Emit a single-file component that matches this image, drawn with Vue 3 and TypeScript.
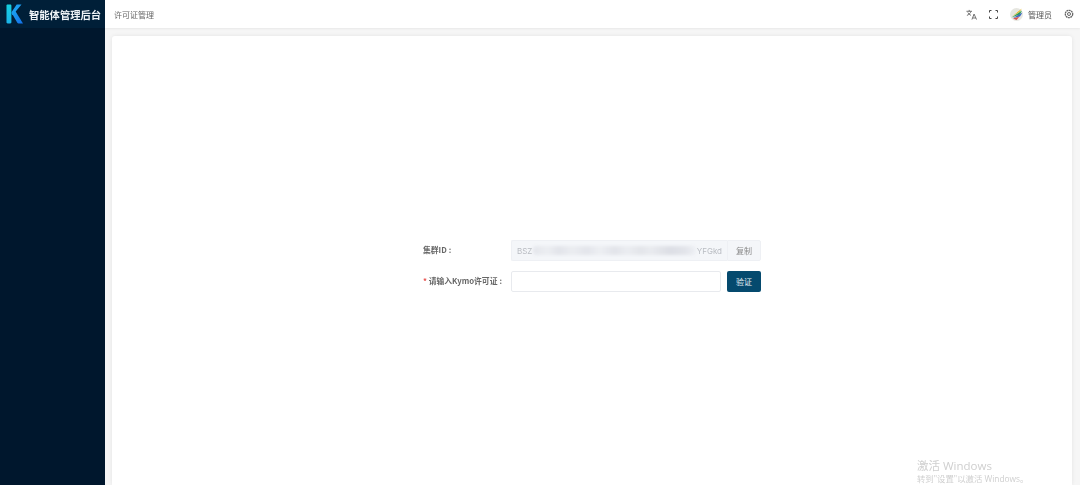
<script setup lang="ts">
const title = '智能体管理后台'
const smearStops = 'linear-gradient(90deg, #e4e6eb 0, #eceef2 9%, #e2e4ea 16%, #ebedf1 24%, #e3e5eb 33%, #edeff3 41%, #e2e4ea 50%, #ebedf1 58%, #e3e5ea 66%, #e9ebef 72%, #dcdee5 84%, #e2e4ea 93%, #eef0f4 100%)'
</script>

<template>
  <div class="app">
    <aside class="side">
      <div class="brand">
        <svg class="logo" width="17" height="20" viewBox="0 0 17 20">
          <defs>
            <linearGradient id="stem" x1="0" y1="0" x2="0" y2="1">
              <stop offset="0" stop-color="#14d0e0" />
              <stop offset="1" stop-color="#1cb4ea" />
            </linearGradient>
            <linearGradient id="leg" x1="0" y1="0" x2="1" y2="1">
              <stop offset="0" stop-color="#1ba6f0" />
              <stop offset="1" stop-color="#1470ea" />
            </linearGradient>
          </defs>
          <path d="M.5 1.500C.5 .8 1 .5 1.600 .5h2.600c.7 0 1.200 .5 1.200 1.200v16.600c0 .7-.5 1.200-1.200 1.200H1.600c-.6 0-1.100-.5-1.100-1.200z" fill="url(#stem)" />
          <path d="M15.500 .5h-4.800L5.800 7.800c-.5 .7-.5 1.500 0 2.200l.8 1.200z" fill="#1b9df2" />
          <path d="M6 9.500 11.300 18.800c.3 .5 .6 .7 1.200 .7H17L9 6.500z" fill="url(#leg)" />
        </svg>
        <span class="title">{{ title }}</span>
      </div>
    </aside>
    <div class="main">
      <header class="top">
        <span class="crumb">许可证管理</span>
        <div class="tools">
          <svg class="ic" width="11" height="11" viewBox="0 0 12 12" fill="none" stroke="#666" stroke-width="1">
            <path d="M.5 2.500h6M3.500 1v1.500M5.500 2.500C5 4.500 3 6.300 1 7M2 3.800c.8 1.500 2 2.600 3.500 3.200M6.500 11.500l2.300-6 2.700 6M7.400 9.800h3.300" />
          </svg>
          <svg class="ic fs" width="9" height="9" viewBox="0 0 9 9" fill="none" stroke="#444" stroke-width="1">
            <path d="M.5 2.500v-2h2M6.500 .5h2v2M8.500 6.500v2h-2M2.500 8.500h-2v-2" />
          </svg>
          <svg class="avatar" width="13" height="13" viewBox="0 0 13 13">
            <circle cx="6.500" cy="6.500" r="6.500" fill="#e6e6e0" />
            <path d="M2 8.500 12 .5 9.500 4z" fill="#e8b820" />
            <path d="M1.500 9.500 12 2.500 10 6.500z" fill="#2f9e50" />
            <path d="M3 10 12.500 4.500 10 8.500z" fill="#3a68c4" />
            <path d="M3 10.500 9.500 8.500 6.500 12z" fill="#d8504a" />
          </svg>
          <span class="user">管理员</span>
          <svg class="ic gear" width="10" height="10" viewBox="0 0 10 10" fill="none" stroke="#666">
            <circle cx="5" cy="5" r="1.500" stroke-width="1" />
            <circle cx="5" cy="5" r="3.700" stroke-width="1.300" stroke-dasharray="1.900 .5" />
          </svg>
        </div>
      </header>
      <div class="body">
        <section class="card">
          <div class="form">
            <div class="row">
              <label class="lab">集群ID<span class="colon">:</span></label>
              <div class="idbox">
                <span class="idtxt">BSZ</span>
                <span class="smear" :style="{ backgroundImage: smearStops }"></span>
                <span class="idtxt">YFGkd</span>
              </div>
              <button class="copy" type="button">复制</button>
            </div>
            <div class="row">
              <label class="lab"><i class="req">*</i> 请输入Kymo许可证<span class="colon">:</span></label>
              <input class="inp" type="text" />
              <button class="verify" type="button">验证</button>
            </div>
          </div>
          <div class="wm">
            <div class="wm1">激活 Windows</div>
            <div class="wm2">转到"设置"以激活 Windows。</div>
          </div>
        </section>
      </div>
    </div>
  </div>
</template>

<style>
html, body { margin: 0; height: 100%; overflow: hidden; }
#app { height: 100%; }
</style>

<style scoped>
.app {
  display: flex;
  height: 485px;
  width: 1080px;
  font-family: "Noto Sans CJK SC", "Liberation Sans", sans-serif;
  color: #555;
  overflow: hidden;
}
.side { width: 105px; flex: none; background: #00172d; }
.brand {
  height: 28px;
  display: flex;
  align-items: center;
  padding-left: 6px;
  gap: 6px;
  background: #001f38;
  box-sizing: border-box;
}
.logo { flex: none; }
.title { font-size: 10.300px; font-weight: 700; color: #eef3f7; white-space: nowrap; filter: blur(.3px); }
.main { flex: 1; display: flex; flex-direction: column; background: #f6f6f6; min-width: 0; }
.top {
  height: 28px;
  flex: none;
  background: #fff;
  display: flex;
  align-items: center;
  justify-content: space-between;
  padding: 0 6px 0 9px;
  box-sizing: border-box;
  box-shadow: 0 1px 2px rgba(0,0,0,.06);
}
.crumb { font-size: 8px; color: #666; filter: blur(.3px); }
.tools { display: flex; align-items: center; filter: blur(.3px); }
.ic { display: block; }
.fs { margin-left: 12px; }
.avatar { margin-left: 12px; }
.user { font-size: 8px; margin-left: 5px; color: #555; }
.gear { margin-left: 12px; }
.body { flex: 1; padding: 8px 8px 0 7px; min-height: 0; display: flex; }
.card {
  flex: 1;
  position: relative;
  background: #fff;
  border-radius: 3px 3px 0 0;
  box-shadow: 0 0 4px rgba(0,0,0,.08);
  display: flex;
  justify-content: center;
  padding-top: 204px;
  box-sizing: border-box;
}
.form { display: flex; flex-direction: column; gap: 10px; width: 338px; filter: blur(.3px); }
.row { display: flex; align-items: center; height: 21px; }
.lab { width: 88px; flex: none; font-size: 7.800px; font-weight: 700; color: #666; white-space: nowrap; position: relative; top: -1px; }
.colon { margin-left: 2px; }
.req { color: #e8524f; font-style: normal; }
.idbox {
  width: 216px;
  height: 21px;
  flex: none;
  background: #f4f6f9;
  border: 1px solid #eef0f4;
  border-right: 0;
  border-radius: 2px 0 0 2px;
  box-sizing: border-box;
  display: flex;
  align-items: center;
  padding: 0 5px;
  font-family: "Inter", "Liberation Sans", sans-serif;
  font-size: 8px;
  color: #b9bcc2;
}
.smear {
  flex: 1;
  height: 9px;
  margin: 0 1px;
  border-radius: 4px;
  filter: blur(1.500px);
}
.copy {
  width: 34px;
  height: 21px;
  flex: none;
  border: 1px solid #eef0f4;
  border-radius: 0 2px 2px 0;
  background: #f4f6f9;
  font: inherit;
  font-size: 8px;
  color: #888;
  padding: 0;
}
.inp {
  width: 210px;
  height: 21px;
  flex: none;
  box-sizing: border-box;
  border: 1px solid #e8eaee;
  border-radius: 2px;
  background: #fff;
  padding: 0;
  outline: 0;
}
.verify {
  width: 34px;
  height: 21px;
  margin-left: 6px;
  flex: none;
  border: 0;
  border-radius: 2px;
  background: #054a6e;
  color: #eaf2f6;
  font: inherit;
  font-size: 8px;
  padding: 0;
}
.wm { position: absolute; left: 805px; top: 422px; color: #cfcfcf; white-space: nowrap; font-family: "Open Sans", "Noto Sans CJK SC", sans-serif; filter: blur(.3px); }
.wm1 { font-size: 11.500px; line-height: 15px; }
.wm2 { font-size: 8.400px; line-height: 12px; }
</style>
